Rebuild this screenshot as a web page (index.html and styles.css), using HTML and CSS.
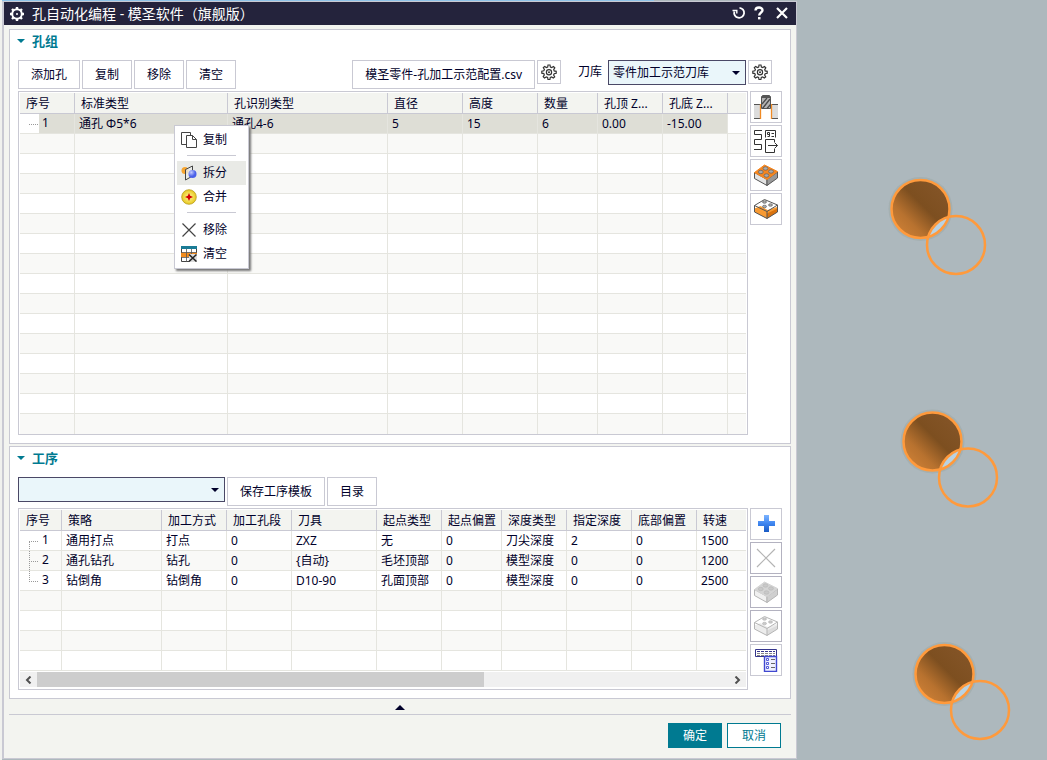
FILE: index.html
```html
<!DOCTYPE html>
<html lang="zh-CN">

<head>
    <meta charset="UTF-8">
    <meta name="viewport" content="width=device-width, initial-scale=1.0">
    <title>孔自动化编程</title>
    <link rel="stylesheet" href="styles.css">
</head>

<body>
    <!-- shared icons -->
    <svg class="defs" aria-hidden="true">
        <symbol id="gear" viewBox="0 0 16 16">
            <path d="M7 1h2l.4 2 1.3.6 1.8-1.1 1.3 1.4-1.1 1.7.5 1.3 2 .4v2l-2 .4-.6 1.3 1.1 1.8-1.4 1.3-1.7-1.1-1.3.5-.4 2H7l-.4-2-1.3-.6-1.8 1.1-1.3-1.4 1.1-1.7-.5-1.3-2-.4v-2l2-.4.6-1.3-1.1-1.8 1.4-1.3 1.7 1.1 1.3-.5z" fill="none" stroke="#333" stroke-width="1.2"/>
            <circle cx="8" cy="8.2" r="2.600" fill="none" stroke="#333" stroke-width="1.2"/>
            <circle cx="8" cy="8.2" r="1" fill="#333"/>
        </symbol>
        <symbol id="block" viewBox="0 0 24 24">
            <path class="b-left" d="M.5 9.500L13 16.500v6L.5 15.500z"/>
            <path class="b-right" d="M13 16.500L23.500 9v6L13 22.500z"/>
            <path class="b-top" d="M.5 9.500L10.500 2 23.500 8.500 13 16.500z"/>
            <g class="b-hole">
                <ellipse cx="11.500" cy="5.500" rx="2.400" ry="1.700"/>
                <ellipse cx="17" cy="8.500" rx="2.400" ry="1.700"/>
                <ellipse cx="6.800" cy="9" rx="2.400" ry="1.700"/>
                <ellipse cx="12.500" cy="12.500" rx="2.400" ry="1.700"/>
            </g>
        </symbol>
        <symbol id="block-open" viewBox="0 0 24 24">
            <path class="o-body" d="M.5 8.500L10.500 2.500 23.500 8v7L13 21.500.5 15z"/>
            <path class="o-base" d="M.5 11.500l6-2.500 7 4 9.500-3v5L13 21.500.5 15z"/>
            <path class="o-side" d="M13 16.500l10.500-5V15L13 21.500z"/>
            <g class="b-hole">
                <ellipse cx="10.500" cy="5" rx="2" ry="1.300"/>
                <ellipse cx="16.500" cy="8" rx="2" ry="1.300"/>
                <ellipse cx="10.500" cy="9.500" rx="2" ry="1.300"/>
            </g>
            <path class="o-wire" d="M.5 8.500L10.500 2.500 23.500 8 13 14.500zM.5 8.500V15L13 21.500v-7M23.500 8v7L13 21.500"/>
        </symbol>
    </svg>

    <div class="app">
        <div class="left">
            <div class="strip"></div>
            <section class="dialog">
                <header class="titlebar">
                    <svg width="16" height="16" viewBox="0 0 16 16">
                        <circle cx="8" cy="8" r="4.800" fill="none" stroke="#fff" stroke-width="2"/>
                        <path d="M8 1v2M8 13v2M1 8h2M13 8h2M3 3l1.400 1.400M11.600 11.600L13 13M3 13l1.400-1.400M11.600 4.400L13 3" stroke="#fff" stroke-width="2.400"/>
                        <circle cx="8" cy="8" r="1" fill="#fff"/>
                    </svg>
                    <h1>孔自动化编程 - 模圣软件（旗舰版）</h1>
                    <button class="win-btn" aria-label="重置">
                        <svg width="14" height="14" viewBox="0 0 14 14" fill="none" stroke="#fff"><path d="M7.500 1.800A5 5 0 1 1 2.300 5.500" stroke-width="1.800"/><path d="M.5 4.500h4.300v3" stroke-width="1.400"/></svg>
                    </button>
                    <button class="win-btn" aria-label="帮助">
                        <svg width="14" height="14" viewBox="0 0 14 14"><path d="M3.500 4.500C3.500 .5 10.500 .5 10.500 4.300 10.500 6.500 7.200 6.500 7.200 9.500" fill="none" stroke="#fff" stroke-width="2.400"/><path d="M6 11h2.500v2.400H6z" fill="#fff"/></svg>
                    </button>
                    <button class="win-btn close" aria-label="关闭">
                        <svg width="14" height="14" viewBox="0 0 14 14"><path d="M2 2l10 10M12 2L2 12" stroke="#fff" stroke-width="2.200"/></svg>
                    </button>
                </header>

                <div class="content">
                    <section class="panel">
                        <h2>孔组</h2>
                        <div class="toolbar">
                            <button class="btn">添加孔</button>
                            <button class="btn">复制</button>
                            <button class="btn">移除</button>
                            <button class="btn">清空</button>
                            <button class="btn push">模圣零件-孔加工示范配置.csv</button>
                            <button class="gear-btn" aria-label="配置设置"><svg width="16" height="16"><use href="#gear"/></svg></button>
                            <label for="library">刀库</label>
                            <div class="select library">
                                <select id="library"><option>零件加工示范刀库</option></select>
                            </div>
                            <button class="gear-btn last" aria-label="刀库设置"><svg width="16" height="16"><use href="#gear"/></svg></button>
                        </div>
                        <div class="work">
                            <div class="grid-box">
                                <table id="holes" data-rows="15">
                                    <colgroup>
                                        <col class="w55"><col class="w153"><col class="w160"><col class="w75"><col class="w75"><col class="w60"><col class="w65"><col class="w65"><col>
                                    </colgroup>
                                    <thead>
                                        <tr><th>序号</th><th>标准类型</th><th>孔识别类型</th><th>直径</th><th>高度</th><th>数量</th><th>孔顶 Z...</th><th>孔底 Z...</th><th></th></tr>
                                    </thead>
                                    <tbody>
                                        <tr class="selected">
                                            <td class="num"><svg class="tree" viewBox="0 0 19 19"><path d="M9 10.500h10"/></svg>1</td>
                                            <td>通孔 Φ5*6</td><td>通孔4-6</td><td>5</td><td>15</td><td>6</td><td>0.00</td><td>-15.00</td><td></td>
                                        </tr>
                                    </tbody>
                                </table>
                            </div>
                            <div class="side">
                                <button aria-label="刀具">
                                    <svg width="24" height="24" viewBox="0 0 24 24">
                                        <path d="M0 9h6v15H0zM18 9h6v15h-6z" fill="#dcdcdc"/>
                                        <path d="M0 9.500h6M18 9.500h6M0 23.500h6M18 23.500h6" stroke="#555"/>
                                        <path d="M6.500 9v15M17.500 9v15" stroke="#f08a24" stroke-width="1.300"/>
                                        <path d="M7.500 1.500l1-1h7l1 1v12h-9z" fill="#b5b5b5" stroke="#555"/>
                                        <path d="M8 9l5-6M8.500 13.500L16 4M13 13.500l3.500-4" stroke="#4a4a4a" stroke-width="1.300"/>
                                        <path d="M8 2h8" stroke="#555" stroke-width="2"/>
                                    </svg>
                                </button>
                                <button aria-label="导出刀路">
                                    <svg width="24" height="24" viewBox="0 0 24 24" fill="none" stroke="#333">
                                        <path d="M8 1.500H.5v4h7v5H.5v5h7v5H0"/>
                                        <path d="M11.500 8.500v-7h10v7"/>
                                        <path d="M13.500 3.500h2v2h-2zM15.500 5v2.500h-2M17.500 4.500h2.500M17.500 7.500h2.500"/>
                                        <path d="M20.500 13v-2.500h-9v13h9V20M14 16.500h9.500M20.500 13.500l3 3-3 3"/>
                                    </svg>
                                </button>
                                <button aria-label="显示孔"><svg class="color" width="24" height="24"><use href="#block"/></svg></button>
                                <button aria-label="透明显示"><svg class="color" width="24" height="24"><use href="#block-open"/></svg></button>
                            </div>
                        </div>
                    </section>

                    <section class="panel">
                        <h2>工序</h2>
                        <div class="toolbar">
                            <div class="select template">
                                <select aria-label="工序模板"><option></option></select>
                            </div>
                            <button class="btn">保存工序模板</button>
                            <button class="btn">目录</button>
                        </div>
                        <div class="work">
                            <div class="grid-box">
                                <table id="steps" data-rows="4">
                                    <colgroup>
                                        <col class="w42"><col class="w100"><col class="w65"><col class="w65"><col class="w85"><col class="w65"><col class="w60"><col class="w65"><col class="w65"><col class="w65"><col>
                                    </colgroup>
                                    <thead>
                                        <tr><th>序号</th><th>策略</th><th>加工方式</th><th>加工孔段</th><th>刀具</th><th>起点类型</th><th>起点偏置</th><th>深度类型</th><th>指定深度</th><th>底部偏置</th><th>转速</th></tr>
                                    </thead>
                                    <tbody>
                                        <tr>
                                            <td class="num"><svg class="tree" viewBox="0 0 19 19"><path d="M9 10.500h10M9.500 11v8"/></svg>1</td>
                                            <td>通用打点</td><td>打点</td><td>0</td><td>ZXZ</td><td>无</td><td>0</td><td>刀尖深度</td><td>2</td><td>0</td><td>1500</td>
                                        </tr>
                                        <tr>
                                            <td class="num"><svg class="tree" viewBox="0 0 19 19"><path d="M9 10.500h10M9.500 0v19"/></svg>2</td>
                                            <td>通孔钻孔</td><td>钻孔</td><td>0</td><td>{自动}</td><td>毛坯顶部</td><td>0</td><td>模型深度</td><td>0</td><td>0</td><td>1200</td>
                                        </tr>
                                        <tr>
                                            <td class="num"><svg class="tree" viewBox="0 0 19 19"><path d="M9 10.500h10M9.500 0v10"/></svg>3</td>
                                            <td>钻倒角</td><td>钻倒角</td><td>0</td><td>D10-90</td><td>孔面顶部</td><td>0</td><td>模型深度</td><td>0</td><td>0</td><td>2500</td>
                                        </tr>
                                    </tbody>
                                </table>
                                <div class="scrollbar">
                                    <button aria-label="向左滚动"><svg width="7" height="8" viewBox="0 0 7 8"><path d="M5.500 .5L2 4l3.500 3.500"/></svg></button>
                                    <div class="track"><div class="thumb"></div></div>
                                    <button aria-label="向右滚动"><svg width="7" height="8" viewBox="0 0 7 8"><path d="M1.500 .5L5 4 1.500 7.500"/></svg></button>
                                </div>
                            </div>
                            <div class="side">
                                <button aria-label="添加工序">
                                    <svg width="24" height="24" viewBox="0 0 24 24">
                                        <defs><linearGradient id="plus" x1="0" y1="0" x2="0" y2="1"><stop offset="0" stop-color="#7db4ff"/><stop offset=".5" stop-color="#3f86f0"/><stop offset="1" stop-color="#1a5bc4"/></linearGradient></defs>
                                        <path d="M10 3h5v6h6v5h-6v6h-5v-6H4V9h6z" fill="url(#plus)"/>
                                    </svg>
                                </button>
                                <button disabled aria-label="删除工序">
                                    <svg width="24" height="24" viewBox="0 0 24 24"><path d="M3 3l18 18M21 3L3 21" stroke="#b4b4b4" stroke-width="1.200"/></svg>
                                </button>
                                <button disabled aria-label="显示工序"><svg class="muted" width="24" height="24"><use href="#block"/></svg></button>
                                <button disabled aria-label="透明显示工序"><svg class="muted" width="24" height="24"><use href="#block-open"/></svg></button>
                                <button aria-label="工序列表">
                                    <svg width="24" height="24" viewBox="0 0 24 24">
                                        <path d="M1.500 1.500h21v7h-21z" fill="#fff" stroke="#35358c"/>
                                        <path d="M3 3.500h18" stroke="#35358c" stroke-dasharray="3 1"/>
                                        <path d="M3 5.500h18M3 7.500h18" stroke="#888" stroke-dasharray="3 1"/>
                                        <path d="M10.500 8.500h12v15h-12z" fill="#eef0ff" stroke="#4048d0" stroke-width="1.400"/>
                                        <path d="M12.500 10.500h2v2h-2zM12.500 14.500h2v2h-2zM12.500 18.500h2v2h-2z" fill="#fff" stroke="#5158d8"/>
                                        <path d="M17 11.500h4M17 15.500h4M17 19.500h4" stroke="#666"/>
                                    </svg>
                                </button>
                            </div>
                        </div>
                    </section>

                    <button class="collapse" aria-label="收起"></button>
                    <footer>
                        <button class="ok">确定</button>
                        <button class="cancel">取消</button>
                    </footer>
                </div>

                <!-- right click menu of the hole table -->
                <div class="menu" role="menu">
                    <button role="menuitem">
                        <svg width="16" height="16" viewBox="0 0 16 16" fill="#fff" stroke="#444"><path d="M.5 .5h9v12h-9z"/><path d="M5.500 3.500h6l4 4v8h-10z"/><path d="M11.500 3.500v4h4" fill="none"/></svg>
                        复制
                    </button>
                    <hr>
                    <button role="menuitem" class="active">
                        <svg width="16" height="16" viewBox="0 0 16 16">
                            <defs><radialGradient id="ball" cx=".35" cy=".3"><stop offset="0" stop-color="#c4ccff"/><stop offset="1" stop-color="#4a60e8"/></radialGradient></defs>
                            <circle cx="4" cy="5.500" r="3.500" fill="#f8a630"/>
                            <path d="M4.500 4.500l7-3.500v10l-7 4z" fill="#e9ebe8" fill-opacity=".8" stroke="#444"/>
                            <circle cx="11.500" cy="9" r="4" fill="url(#ball)"/>
                        </svg>
                        拆分
                    </button>
                    <button role="menuitem">
                        <svg width="16" height="16" viewBox="0 0 16 16">
                            <defs><radialGradient id="coin"><stop offset="0" stop-color="#fff79a"/><stop offset="1" stop-color="#e8c81e"/></radialGradient></defs>
                            <circle cx="8" cy="8" r="7.300" fill="url(#coin)" stroke="#b89c20" stroke-width=".8"/>
                            <path d="M8 4l1.200 2.800L12 8 9.200 9.200 8 12 6.800 9.200 4 8l2.800-1.200z" fill="#d40000"/>
                        </svg>
                        合并
                    </button>
                    <hr>
                    <button role="menuitem">
                        <svg width="16" height="16" viewBox="0 0 16 16"><path d="M1.500 1.500l13 13M14.500 1.500l-13 13" stroke="#444" stroke-width="1.200"/></svg>
                        移除
                    </button>
                    <button role="menuitem">
                        <svg width="16" height="16" viewBox="0 0 16 16">
                            <path d="M.5 .5h15v15H.5z" fill="#fff" stroke="#444"/>
                            <path d="M0 0h16v3H0z" fill="#1b7c96"/>
                            <path d="M0 6.500h16V11H0z" fill="#f28c1e"/>
                            <path d="M5.500 3v13M10.500 3v13M0 6.500h16M0 11.500h16" stroke="#555" stroke-width=".8"/>
                            <path d="M8 8h8v8H8z" fill="#ddd"/>
                            <path d="M8 8.500l7.500 7M15.500 8.500l-7.500 7" stroke="#222" stroke-width="1.500"/>
                        </svg>
                        清空
                    </button>
                </div>
            </section>
        </div>

        <!-- model view -->
        <main class="canvas">
            <svg width="250" height="760" viewBox="797 0 250 760">
                <defs>
                    <linearGradient id="bore" x1="0" y1="1" x2="1" y2="0">
                        <stop offset=".1" stop-color="#cd8036"/>
                        <stop offset=".3" stop-color="#b8722f"/>
                        <stop offset=".55" stop-color="#7d4f20"/>
                        <stop offset="1" stop-color="#87572a"/>
                    </linearGradient>
                    <clipPath id="rim"><circle cx="920.500" cy="209" r="29"/></clipPath>
                    <g id="hole">
                        <circle cx="920.500" cy="209" r="32" fill="#94a19c" opacity=".35"/>
                        <circle cx="920.500" cy="209" r="29" fill="url(#bore)"/>
                        <circle cx="956" cy="245" r="29" fill="#b9d2e2" clip-path="url(#rim)"/>
                        <circle cx="920.500" cy="209" r="29" fill="none" stroke="#ff9a3c" stroke-width="2.500"/>
                        <circle cx="956" cy="245" r="29" fill="none" stroke="#ff9a3c" stroke-width="2.500"/>
                    </g>
                </defs>
                <use href="#hole"/>
                <use href="#hole" x="12" y="232.500"/>
                <use href="#hole" x="24" y="465"/>
            </svg>
        </main>
    </div>

    <script>
        // fill the rest of each table with empty rows
        document.querySelectorAll('table').forEach(function (table) {
            var cols = table.querySelectorAll('th').length;
            for (var i = 0; i < table.dataset.rows; i++) {
                var row = table.tBodies[0].insertRow();
                for (var j = 0; j < cols; j++) {
                    row.insertCell();
                }
            }
        });
    </script>
</body>

</html>
```
FILE: styles.css
```css
* {
    box-sizing: border-box;
}

body {
    margin: 0;
    background-color: #adb8bd;
    color: #00002a;
    font-family: "Noto Sans", "Noto Sans CJK SC", sans-serif;
    font-size: 12px;
    line-height: 18px;
}

button, select {
    font: inherit;
    color: inherit;
    margin: 0;
}

svg {
    display: block;
    flex: none;
}

.defs {
    position: absolute;
    width: 0;
    height: 0;
}

.app {
    display: grid;
    grid-template-columns: minmax(0, 1fr) 250px;
    min-height: 100vh;
}

.left {
    background: linear-gradient(90deg, #f0f1ee 2px, #adb8bd 2px);
    padding-left: 2px;
}

.strip {
    width: 82%;
    height: 1px;
    background-color: #8fc3e8;
}

.dialog {
    position: relative;
    border: 1px solid #c9c9d3;
    border-left-width: 2px;
    background-color: #f3f4f0;
}

/* title bar */
.titlebar {
    display: flex;
    align-items: center;
    height: 23px;
    padding: 0 1px 0 5px;
    background-color: #24233c;
    color: #fff;
}

.titlebar h1 {
    flex: 1;
    margin: 0 0 0 7px;
    font-size: 14px;
    font-weight: 400;
    line-height: 22px;
}

.win-btn {
    display: flex;
    align-items: center;
    justify-content: center;
    width: 20px;
    height: 23px;
    padding: 0 0 2px;
    border: 0;
    background: none;
}

.close {
    width: 26px;
}

.content {
    padding: 4px 5px 0;
}

/* panels */
.panel {
    margin-bottom: 2px;
    padding: 0 8px 8px;
    border: 1px solid #c9c9d3;
    background-color: #fff;
}

.panel + .panel {
    margin-bottom: 0;
}

.panel h2 {
    display: flex;
    align-items: center;
    gap: 7px;
    height: 22px;
    margin: 0 -1px 8px;
    color: #007a91;
    font-size: 13px;
    font-weight: 700;
}

.panel h2::before {
    content: "";
    border: 4px solid transparent;
    border-top-color: #007a91;
    border-bottom: 0;
}

.toolbar {
    display: flex;
    align-items: flex-start;
    gap: 2px;
    margin-bottom: 2px;
}

.btn {
    height: 29px;
    padding: 0 12px;
    border: 1px solid #c9c9d3;
    background-color: #fff;
    white-space: nowrap;
}

.push {
    margin-left: auto;
}

.gear-btn {
    display: flex;
    align-items: center;
    justify-content: center;
    width: 24px;
    height: 24px;
    padding: 0;
    border: 1px solid #c9c9d3;
    background-color: #fff;
}

.last {
    margin-right: 10px;
}

.toolbar label {
    margin: 0 4px 0 15px;
    line-height: 24px;
}

.select {
    position: relative;
}

.select select {
    width: 100%;
    height: 25px;
    padding: 0 20px 0 4px;
    border: 1px solid #4a4866;
    border-radius: 0;
    background-color: #eaf6fa;
    appearance: none;
}

.select::after {
    content: "";
    position: absolute;
    top: 11px;
    right: 6px;
    border: 4px solid transparent;
    border-top-color: #00002a;
    border-bottom: 0;
    pointer-events: none;
}

.library {
    width: 138px;
}

.template {
    width: 207px;
}

/* tables */
.work {
    display: flex;
    gap: 2px;
}

.grid-box {
    flex: 1;
    min-width: 0;
    padding: 1px 1px 0;
    border: 1px solid #c9c9d3;
}

table {
    width: 100%;
    table-layout: fixed;
    border-spacing: 0;
}

.w42 { width: 42px; }
.w55 { width: 55px; }
.w60 { width: 60px; }
.w65 { width: 65px; }
.w75 { width: 75px; }
.w85 { width: 85px; }
.w100 { width: 100px; }
.w153 { width: 153px; }
.w160 { width: 160px; }

th {
    height: 21px;
    padding: 2px 0 0 6px;
    border-right: 1px solid #c9c9d3;
    border-bottom: 1px solid #c9c9d3;
    background-color: #f3f4f0;
    font-weight: 400;
    text-align: left;
    white-space: nowrap;
}

td {
    height: 20px;
    padding: 0 0 0 4px;
    border-right: 1px solid #e5e5df;
    border-bottom: 1px solid #e5e5df;
    white-space: nowrap;
}

th:last-child, td:last-child {
    border-right: 0;
}

tbody tr:nth-child(even) {
    background-color: #f9f9f7;
}

#holes tbody tr:last-child td {
    border-bottom: 0;
}

.selected td {
    background-color: #deded6;
}

.selected td:last-child {
    background-color: #fff;
}

.num {
    padding: 0;
}

.tree {
    float: left;
    width: 19px;
    height: 19px;
    margin-right: 3px;
    fill: none;
    stroke: #999;
    stroke-dasharray: 1 1;
}

.selected .tree {
    background-color: #fff;
}

.scrollbar {
    display: flex;
    height: 15px;
    margin: 1px 0 2px;
    background-color: #f0f0f0;
}

.scrollbar button {
    display: flex;
    align-items: center;
    justify-content: center;
    width: 17px;
    padding: 0;
    border: 0;
    background: none;
}

.scrollbar path {
    fill: none;
    stroke: #505050;
    stroke-width: 2;
}

.track {
    flex: 1;
}

.thumb {
    width: 64.6%;
    height: 100%;
    background-color: #cdcdcd;
}

/* icon column */
.side {
    display: flex;
    flex-direction: column;
    gap: 2px;
}

.side button {
    display: flex;
    align-items: center;
    justify-content: center;
    width: 32px;
    height: 32px;
    padding: 0;
    border: 1px solid #c9c9d3;
    background-color: #fff;
}

.side button:disabled {
    border-color: #b3b2c0;
}

.color {
    --top: #f5861f;
    --left: #e2e2e2;
    --right: #999;
    --line: #555;
    --hole: #aaa;
    --body: #fff;
    --base: #f79a33;
    --shade: #d9730f;
}

.muted {
    --top: #d4d4d4;
    --left: #f0f0f0;
    --right: #cfcfcf;
    --line: #b5b5b5;
    --hole: #c9c9c9;
    --body: #fff;
    --base: #ececec;
    --shade: #dcdcdc;
}

.b-top { fill: var(--top); stroke: var(--top); }
.b-left { fill: var(--left); stroke: var(--line); stroke-width: 1; }
.b-right { fill: var(--right); stroke: var(--line); stroke-width: 1; }
.b-hole { fill: var(--hole); stroke: var(--line); stroke-width: .6; }
.o-body { fill: var(--body); }
.o-base { fill: var(--base); }
.o-side { fill: var(--shade); }
.o-wire { fill: none; stroke: var(--line); stroke-width: 1; }

/* bottom of the dialog */
.collapse {
    display: flex;
    align-items: center;
    justify-content: center;
    width: 100%;
    height: 15px;
    padding: 2px 0 0;
    border: 0;
    background: none;
}

.collapse::before {
    content: "";
    border: 5px solid transparent;
    border-top: 0;
    border-bottom-color: #00002a;
}

footer {
    display: flex;
    justify-content: flex-end;
    gap: 5px;
    padding: 8px 10px 10px;
    border-top: 1px solid #c9c9d3;
}

footer button {
    width: 54px;
    height: 25px;
    padding: 0;
    border: 1px solid #007a91;
}

.ok {
    background-color: #007a91;
    color: #fff;
}

.cancel {
    background-color: #fff;
    color: #007a91;
}

/* context menu */
.menu {
    position: absolute;
    top: 123px;
    left: 170px;
    width: 75px;
    padding: 2px;
    border: 1px solid #c9c9d3;
    background-color: #fff;
    box-shadow: 2px 2px 2px #777;
}

.menu button {
    display: flex;
    align-items: center;
    gap: 6px;
    width: 100%;
    height: 24px;
    padding: 0 4px;
    border: 0;
    background: none;
}

.menu .active {
    background-color: #e9eae6;
}

.menu hr {
    height: 1px;
    margin: 3px 10px 5px;
    border: 0;
    background-color: #c9c9d3;
}
```
